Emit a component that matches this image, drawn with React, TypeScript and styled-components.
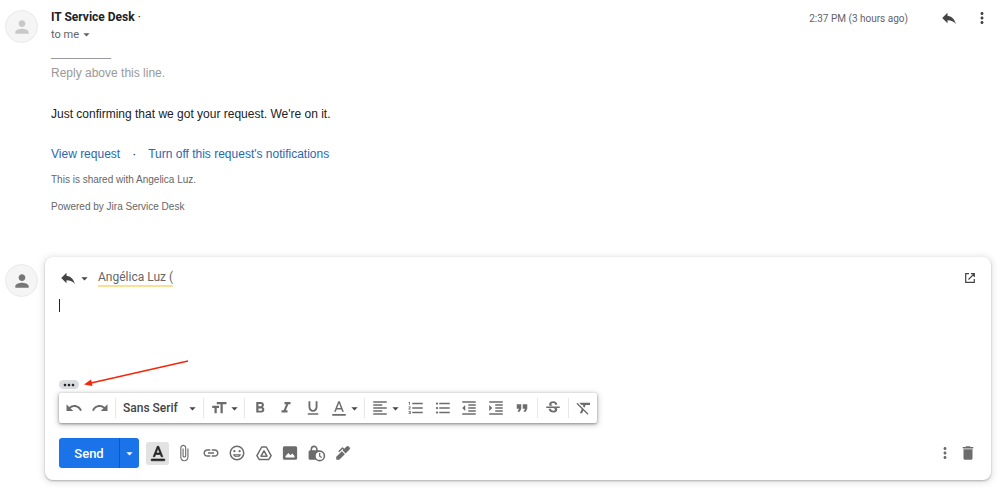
import React from 'react';
import styled, { createGlobalStyle } from 'styled-components';
import {
  MdArrowDropDown,
  MdAttachFile,
  MdDelete,
  MdFormatAlignLeft,
  MdFormatBold,
  MdFormatClear,
  MdFormatIndentDecrease,
  MdFormatIndentIncrease,
  MdFormatItalic,
  MdFormatListBulleted,
  MdFormatListNumbered,
  MdFormatQuote,
  MdFormatSize,
  MdFormatUnderlined,
  MdInsertLink,
  MdMoreHoriz,
  MdMoreVert,
  MdPerson,
  MdRedo,
  MdReply,
  MdStrikethroughS,
  MdUndo,
} from 'react-icons/md';

const GlobalStyle = createGlobalStyle`
  * { box-sizing: border-box; }
  body {
    margin: 0;
    background: #fff;
    color: #202124;
    font-family: Roboto, "Liberation Sans", sans-serif;
    font-size: 12px;
  }
  svg { display: block; flex: none; }
`;

const Page = styled.main`
  display: flex;
  flex-direction: column;
  gap: 44px;
  padding: 9px 8px 18px 5px;
`;

const Entry = styled.article<{ $gap: number }>`
  display: flex;
  align-items: flex-start;
  gap: ${(p) => p.$gap}px;
`;

const Avatar = styled.div<{ $tone: string; $top: number }>`
  display: flex;
  flex: none;
  align-items: center;
  justify-content: center;
  width: 33px;
  height: 33px;
  margin-top: ${(p) => p.$top}px;
  border: 1px solid #e9e9e9;
  border-radius: 50%;
  background: #f5f5f5;
  color: ${(p) => p.$tone};
`;

const Content = styled.div`
  flex: 1;
  min-width: 0;
`;

const Header = styled.header`
  display: flex;
  align-items: flex-start;
  justify-content: space-between;
`;

const Sender = styled.h1`
  margin: 0;
  font-size: 12px;
  font-weight: 700;
  line-height: 17px;

  span { font-weight: 400; }
`;

const PlainButton = styled.button`
  display: flex;
  align-items: center;
  justify-content: center;
  padding: 0;
  border: 0;
  background: none;
  color: #444;
  font: inherit;
  cursor: pointer;
`;

const Recipient = styled(PlainButton)`
  height: 17px;
  color: #5f6368;
  font-size: 11px;
`;

const HeaderTools = styled.div`
  display: flex;
  align-items: center;
  height: 18px;
`;

const Time = styled.time`
  margin-right: 32px;
  color: #5f6368;
  font-size: 10px;
`;

const HeaderButton = styled(PlainButton)`
  width: 18px;
  height: 18px;

  & + & { margin-left: 15px; }
`;

const Message = styled.div`
  padding-top: 8px;
  font-family: "Liberation Sans", Arial, sans-serif;
  font-size: 12px;
  line-height: 15px;
`;

const Marker = styled.p`
  margin: 0 0 26px;
  color: #999;
`;

const Text = styled.p`
  margin: 0 0 25px;
`;

const Links = styled.p`
  display: flex;
  gap: 12px;
  margin: 0 0 12px;
`;

const Link = styled.a`
  color: #2a67b2;
  text-decoration: none;
`;

const Note = styled.p`
  margin: 0;
  color: #666;
  font-size: 10px;
  line-height: 12px;

  & + & { margin-top: 15px; }
`;

const Card = styled.section`
  display: flex;
  flex: 1;
  flex-direction: column;
  min-width: 0;
  padding: 12px 12px 12px 14px;
  border-radius: 8px;
  background: #fff;
  box-shadow: 0 1px 2px rgba(60, 64, 67, 0.35), 0 1px 6px 2px rgba(60, 64, 67, 0.13);
`;

const Row = styled.div`
  display: flex;
  align-items: center;
  justify-content: space-between;
`;

const Cluster = styled.div`
  display: flex;
  align-items: center;
`;

const ReplyType = styled(PlainButton)`
  height: 18px;
  margin-right: 6px;
`;

const Addressee = styled.span`
  border-bottom: 2px solid #fbe093;
  color: #666;
  font-size: 12px;
  line-height: 15px;
`;

const Editor = styled.div`
  position: relative;
  display: flex;
  padding-top: 12px;
`;

const Cursor = styled.span`
  width: 1px;
  height: 13px;
  background: #222;
`;

const Draft = styled.textarea`
  flex: 1;
  height: 81px;
  padding: 0;
  border: 0;
  outline: 0;
  resize: none;
  font: 12px/15px "Liberation Sans", Arial, sans-serif;
`;

const Pointer = styled.svg`
  position: absolute;
  top: 70px;
  left: 22px;
  pointer-events: none;
`;

const TrimButton = styled(PlainButton)`
  width: 20px;
  height: 9px;
  border-radius: 5px;
  background: #dadce0;
  color: #222;
`;

const Toolbar = styled.div`
  display: flex;
  align-items: center;
  align-self: flex-start;
  height: 30px;
  margin-top: 4px;
  padding-left: 2px;
  border-radius: 2px;
  background: #fff;
  box-shadow: 0 1px 3px rgba(0, 0, 0, 0.4), 0 1px 6px 1px rgba(0, 0, 0, 0.16);
`;

const Group = styled.div<{ $width?: number }>`
  display: flex;
  justify-content: space-between;
  width: ${(p) => (p.$width ? `${p.$width}px` : 'auto')};

  & + & {
    margin-left: 2px;
    padding-left: 2px;
    border-left: 1px solid #e8e8e8;
  }
`;

const Tool = styled(PlainButton)<{ $menu?: boolean }>`
  justify-content: flex-start;
  width: ${(p) => (p.$menu ? 36 : 26)}px;
  height: 20px;
  padding-left: 4px;
  color: #6c6c6c;

  svg + svg { margin-left: -1px; color: #444; }
`;

const FontPicker = styled(PlainButton)`
  justify-content: space-between;
  width: 83px;
  height: 20px;
  padding: 0 1px 0 5px;
  font-size: 12px;
  font-weight: 500;
`;

const Actions = styled(Row)`
  margin-top: 15px;
`;

const SendGroup = styled.div`
  display: flex;
  height: 30px;
  margin-right: 7px;
  overflow: hidden;
  border-radius: 3px;
  background: #1a73e8;
`;

const Send = styled(PlainButton)`
  width: 60px;
  color: #fff;
  font-size: 13px;
  font-weight: 500;
`;

const SendMenu = styled(PlainButton)`
  width: 20px;
  border-left: 1px solid #1557b0;
  color: #fff;
`;

const Insert = styled.div`
  display: flex;
  justify-content: space-between;
  width: 209px;
`;

const InsertButton = styled(PlainButton)<{ $active?: boolean }>`
  width: 23px;
  height: 23px;
  border-radius: 3px;
  background: ${(p) => (p.$active ? '#e2e2e2' : 'none')};
  color: ${(p) => (p.$active ? '#222' : '#6c6c6c')};
`;

type IconProps = { size?: number; bold?: boolean };

const TextColorIcon = ({ size = 18, bold = false }: IconProps) => (
  <svg
    width={size}
    height={size}
    viewBox="0 0 24 24"
    fill="currentColor"
    stroke={bold ? 'currentColor' : 'none'}
    strokeWidth="0.8"
    aria-hidden="true"
  >
    <path d="M3 20h18v2.4H3zM11 3 5.5 17h2.25l1.12-3h6.25l1.12 3h2.25L13 3zm-1.38 9L12 5.67 14.38 12z" />
  </svg>
);

const SmileIcon = ({ size = 18 }: IconProps) => (
  <svg width={size} height={size} viewBox="0 0 24 24" fill="currentColor" aria-hidden="true">
    <path d="M12 2a10 10 0 1 0 0 20 10 10 0 0 0 0-20zm0 18a8 8 0 1 1 0-16 8 8 0 0 1 0 16z" />
    <circle cx="8.5" cy="9.5" r="1.5" />
    <circle cx="15.5" cy="9.5" r="1.5" />
    <path d="M6.5 13.5h11a5.8 5.8 0 0 1-11 0zm3.1 1.7a3.4 3.4 0 0 0 4.8 0z" fillRule="evenodd" />
  </svg>
);

const DriveIcon = ({ size = 18 }: IconProps) => (
  <svg
    width={size}
    height={size}
    viewBox="0 0 24 24"
    fill="none"
    stroke="currentColor"
    strokeWidth="2"
    strokeLinejoin="round"
    aria-hidden="true"
  >
    <path d="M9 4h6l6.5 11.5-3 5h-13l-3-5z" />
    <path d="M12 9.2 16 16.2H8z" />
  </svg>
);

const PhotoIcon = ({ size = 18 }: IconProps) => (
  <svg width={size} height={size} viewBox="0 0 24 24" fill="currentColor" fillRule="evenodd" aria-hidden="true">
    <path d="M4.5 3h15a2 2 0 0 1 2 2v14a2 2 0 0 1-2 2h-15a2 2 0 0 1-2-2V5a2 2 0 0 1 2-2zM6 18h12v-2l-3-3.5-2.500 2.500-2.500-3L6 16z" />
  </svg>
);

const LockClockIcon = ({ size = 20 }: IconProps) => (
  <svg width={size} height={size} viewBox="0 0 24 24" fill="none" aria-hidden="true">
    <path d="M5.500 9V6.500a3.500 3.500 0 0 1 7 0V9" stroke="currentColor" strokeWidth="2" />
    <path d="M4 8h10a2 2 0 0 1 2 2v8a2 2 0 0 1-2 2H4a2 2 0 0 1-2-2v-8a2 2 0 0 1 2-2z" fill="currentColor" />
    <circle cx="16" cy="15" r="6" fill="#fff" stroke="currentColor" strokeWidth="2" />
    <path d="M16 11.500v4l2.600 1.600" stroke="currentColor" strokeWidth="1.600" />
  </svg>
);

const PenIcon = ({ size = 18 }: IconProps) => (
  <svg width={size} height={size} viewBox="0 0 24 24" fill="currentColor" aria-hidden="true">
    <path d="M3 21v-4l7.500-7.500 4 4L7 21z" />
    <path d="m15.500 12.500-4-4 .8-.8-1-1-4.200 4.200-1.400-1.400 4.900-4.900a1 1 0 0 1 1.400 0l1.700 1.700 3-3a2.200 2.200 0 0 1 3.100 0l.9.9a2.200 2.200 0 0 1 0 3.100z" />
  </svg>
);

const PopOutIcon = ({ size = 12 }: IconProps) => (
  <svg
    width={size}
    height={size}
    viewBox="0 0 12 12"
    fill="none"
    stroke="currentColor"
    strokeWidth="1.2"
    aria-hidden="true"
  >
    <path d="M5 1.700H1.700v8.600h8.600V7M7 1.700h3.300V5M10.300 1.700 4.500 7.500" />
  </svg>
);

const caret = <MdArrowDropDown size={15} />;

export default function App() {
  return (
    <>
      <GlobalStyle />
      <Page>
        <Entry $gap={13}>
          <Avatar $tone="#c8c8c8" $top={1}><MdPerson size={20} /></Avatar>
          <Content>
            <Header>
              <div>
                <Sender>IT Service Desk <span>·</span></Sender>
                <Recipient type="button">to me {caret}</Recipient>
              </div>
              <HeaderTools>
                <Time>2:37 PM (3 hours ago)</Time>
                <HeaderButton type="button" aria-label="Reply"><MdReply size={18} /></HeaderButton>
                <HeaderButton type="button" aria-label="More"><MdMoreVert size={18} /></HeaderButton>
              </HeaderTools>
            </Header>
            <Message>
              <Marker>—————<br />Reply above this line.</Marker>
              <Text>Just confirming that we got your request. We're on it.</Text>
              <Links>
                <Link href="#request">View request</Link>
                <span>·</span>
                <Link href="#notifications">Turn off this request's notifications</Link>
              </Links>
              <Note>This is shared with Angelica Luz.</Note>
              <Note>Powered by Jira Service Desk</Note>
            </Message>
          </Content>
        </Entry>

        <Entry $gap={7}>
          <Avatar $tone="#777" $top={7}><MdPerson size={20} /></Avatar>
          <Card>
            <Row>
              <Cluster>
                <ReplyType type="button" aria-label="Type of response">
                  <MdReply size={18} />
                  {caret}
                </ReplyType>
                <Addressee>Angélica Luz (</Addressee>
              </Cluster>
              <HeaderButton type="button" aria-label="Pop out reply"><PopOutIcon /></HeaderButton>
            </Row>
            <Editor>
              <Cursor />
              <Draft aria-label="Message body" />
              <Pointer width="110" height="32" viewBox="0 0 110 32" aria-hidden="true">
                <path d="M107 4 10 26" stroke="#f5250a" strokeWidth="1.5" />
                <path d="m3 27.500 7-5 1.500 6.500z" fill="#f5250a" />
              </Pointer>
            </Editor>
            <TrimButton type="button" aria-label="Show trimmed content"><MdMoreHoriz size={16} /></TrimButton>
            <Toolbar role="toolbar" aria-label="Formatting options">
              <Group>
                <Tool type="button" aria-label="Undo"><MdUndo size={18} /></Tool>
                <Tool type="button" aria-label="Redo"><MdRedo size={18} /></Tool>
              </Group>
              <Group>
                <FontPicker type="button">Sans Serif {caret}</FontPicker>
              </Group>
              <Group>
                <Tool $menu type="button" aria-label="Size"><MdFormatSize size={18} />{caret}</Tool>
              </Group>
              <Group $width={118}>
                <Tool type="button" aria-label="Bold"><MdFormatBold size={18} /></Tool>
                <Tool type="button" aria-label="Italic"><MdFormatItalic size={18} /></Tool>
                <Tool type="button" aria-label="Underline"><MdFormatUnderlined size={18} /></Tool>
                <Tool $menu type="button" aria-label="Text colour"><TextColorIcon />{caret}</Tool>
              </Group>
              <Group $width={171}>
                <Tool $menu type="button" aria-label="Align"><MdFormatAlignLeft size={18} />{caret}</Tool>
                <Tool type="button" aria-label="Numbered list"><MdFormatListNumbered size={18} /></Tool>
                <Tool type="button" aria-label="Bulleted list"><MdFormatListBulleted size={18} /></Tool>
                <Tool type="button" aria-label="Indent less"><MdFormatIndentDecrease size={18} /></Tool>
                <Tool type="button" aria-label="Indent more"><MdFormatIndentIncrease size={18} /></Tool>
                <Tool type="button" aria-label="Quote"><MdFormatQuote size={18} /></Tool>
              </Group>
              <Group>
                <Tool type="button" aria-label="Strikethrough"><MdStrikethroughS size={18} /></Tool>
              </Group>
              <Group>
                <Tool type="button" aria-label="Remove formatting"><MdFormatClear size={18} /></Tool>
              </Group>
            </Toolbar>
            <Actions>
              <Cluster>
                <SendGroup>
                  <Send type="button">Send</Send>
                  <SendMenu type="button" aria-label="More send options">{caret}</SendMenu>
                </SendGroup>
                <Insert>
                  <InsertButton $active type="button" aria-label="Formatting options"><TextColorIcon bold /></InsertButton>
                  <InsertButton type="button" aria-label="Attach files"><MdAttachFile size={18} /></InsertButton>
                  <InsertButton type="button" aria-label="Insert link"><MdInsertLink size={18} /></InsertButton>
                  <InsertButton type="button" aria-label="Insert emoji"><SmileIcon /></InsertButton>
                  <InsertButton type="button" aria-label="Insert files using Drive"><DriveIcon /></InsertButton>
                  <InsertButton type="button" aria-label="Insert photo"><PhotoIcon /></InsertButton>
                  <InsertButton type="button" aria-label="Confidential mode"><LockClockIcon size={19} /></InsertButton>
                  <InsertButton type="button" aria-label="Insert signature"><PenIcon /></InsertButton>
                </Insert>
              </Cluster>
              <Cluster>
                <InsertButton type="button" aria-label="More options"><MdMoreVert size={18} /></InsertButton>
                <InsertButton type="button" aria-label="Discard draft"><MdDelete size={18} /></InsertButton>
              </Cluster>
            </Actions>
          </Card>
        </Entry>
      </Page>
    </>
  );
}
